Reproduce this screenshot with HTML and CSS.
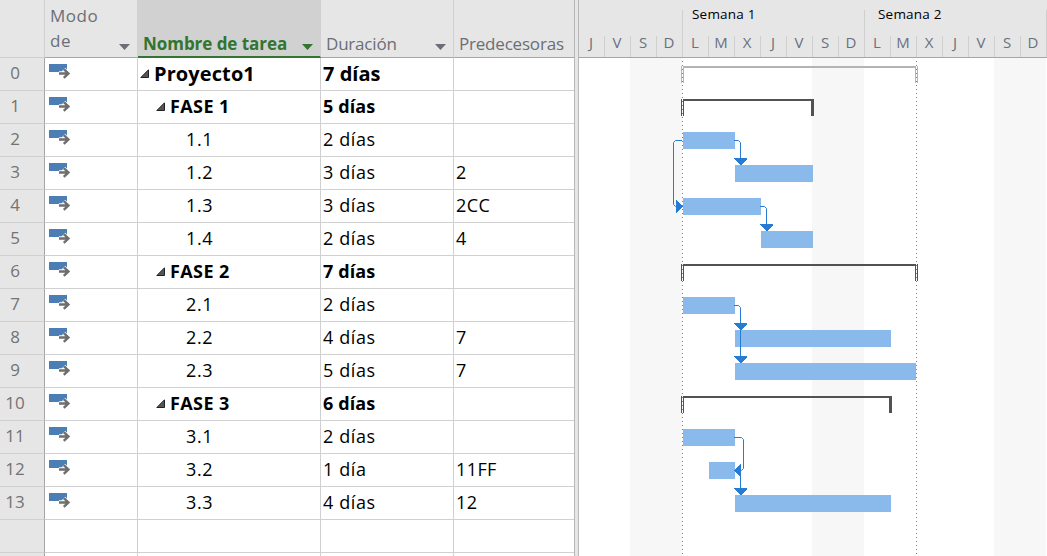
FILE: index.html
```html
<!DOCTYPE html>
<html lang="es">
<head>
<meta charset="utf-8">
<title>Proyecto1</title>
<link rel="stylesheet" href="styles.css">
</head>
<body>
<svg class="defs" width="0" height="0">
  <symbol id="mode" viewBox="0 0 22 15">
    <rect x="0" y="0" width="18" height="8" fill="#4a7eb4"/>
    <path d="M10 9.500H19M14.500 5.500L18.500 9.500L14.500 13.500" fill="none" stroke="#fff" stroke-width="4.600"/>
    <path d="M10 9.500H20M14.800 5.200L19.400 9.500L14.800 13.800" fill="none" stroke="#6e6e6e" stroke-width="2.400"/>
  </symbol>
  <symbol id="fold" viewBox="0 0 9 9"><path d="M8.500 .8V8.500H.8Z" fill="#555" stroke="#222" stroke-width="1"/></symbol>
  <symbol id="drop" viewBox="0 0 11 6"><path d="M0 0H11L5.500 6Z" fill="currentColor"/></symbol>
</svg>
<main class="app">
  <section class="sheet">
    <div class="row head">
      <div class="num"></div>
      <div class="cell mode"><span>Modo<br>de</span><svg class="drop"><use href="#drop"/></svg></div>
      <div class="cell name"><span>Nombre de tarea</span><svg class="drop"><use href="#drop"/></svg></div>
      <div class="cell dur"><span>Duración</span><svg class="drop"><use href="#drop"/></svg></div>
      <div class="cell pred"><span>Predecesoras</span></div>
    </div>
    <div id="rows"></div>
  </section>
  <div class="splitter"></div>
  <section class="gantt">
    <div class="scale">
      <div class="weeks"><div class="week part"></div><div class="week">Semana 1</div><div class="week second">Semana 2</div><div class="week last"></div></div>
      <div class="days" id="days"></div>
    </div>
    <svg class="chart" viewBox="579 58 468 498" width="468" height="498" shape-rendering="crispEdges">
      <g fill="#f7f7f7"><path d="M630 58h52v498h-52zM812 58h52v498h-52zM994 58h52v498h-52z"/></g>
      <g fill="#8abaec">
        <rect x="683" y="132" width="52" height="17"/><rect x="735" y="165" width="78" height="17"/>
        <rect x="683" y="198" width="78" height="17"/><rect x="761" y="231" width="52" height="17"/>
        <rect x="683" y="297" width="52" height="17"/><rect x="735" y="330" width="156" height="17"/>
        <rect x="735" y="363" width="181" height="17"/><rect x="683" y="429" width="52" height="17"/>
        <rect x="709" y="462" width="26" height="17"/><rect x="735" y="495" width="156" height="17"/>
      </g>
      <g fill="#b4b4b4"><path d="M681 66h1v17h-1zM683 66h233v2h-232v15h-1zM915 66h1v17h-1zM917 66h1v17h-1z"/></g>
      <g fill="#525252">
        <path d="M681 99h1v17h-1zM683 99h131v17h-3v-15h-127v15h-1z"/>
        <path d="M681 264h1v17h-1zM683 264h233v17h-1v-15h-231v15h-1zM917 264h1v17h-1z"/>
        <path d="M681 396h1v17h-1zM683 396h209v17h-3v-15h-205v15h-1z"/>
      </g>
      <path d="M682.500 61V556M916.500 61V556" stroke="#7c7c7c" stroke-dasharray="1 3" fill="none"/>
      <g fill="none" stroke="#267bd3" shape-rendering="auto">
        <path d="M734 140.500H738.500L740.500 142.500V160M682 140.500H675.500L673.500 142.500V204.500L675.500 206.500H678"/>
        <path d="M760 206.500H764.500L766.500 208.500V226M734 305.500H738.500L740.500 307.500V360"/>
        <path d="M734 437.500H741.500L743.500 439.500V468.500L741.500 470.500H738M740.500 464V491"/>
      </g>
      <g fill="#267bd3">
        <path d="M734 158h13v1l-6 6h-1l-6-6zM760 224h13v1l-6 6h-1l-6-6z"/>
        <path d="M734 323h13v1l-6 6h-1l-6-6zM734 356h13v1l-6 6h-1l-6-6zM734 488h13v1l-6 6h-1l-6-6z"/>
        <path d="M676 200l6.500 6.500l-6.500 6.500zM741 464l-7 6.500l7 6.500z"/>
      </g>
    </svg>
  </section>
</main>
<script src="app.js"></script>
</body>
</html>
```
FILE: styles.css
```css
* { box-sizing: border-box; }
body { margin: 0; width: 1047px; height: 556px; overflow: hidden; background: #fff; font-family: "Open Sans", "Noto Sans", sans-serif; color: #000; }
.defs { position: absolute; }
.app { display: flex; height: 556px; overflow: hidden; }
.sheet { width: 575px; flex: none; height: 556px; overflow: hidden; }
.row { display: grid; grid-template-columns: 45px 93px 183px 133px 121px; height: 33px; }
.num { background: #e6e6e6; border-right: 1px solid #a6a6a6; border-bottom: 1px solid #cfcfcf; color: #737373; font-size: 17px; line-height: 29px; text-align: center; padding-right: 14px; }
.cell { border-right: 1px solid #d0d0d0; border-bottom: 1px solid #d0d0d0; font-size: 18px; line-height: 31px; white-space: nowrap; overflow: hidden; padding-left: 2px; letter-spacing: .6px; }
.cell.pred { letter-spacing: .4px; }
.row .cell.mode { padding: 6px 0 0 4px; line-height: 0; }
.cell.mode svg { display: block; width: 22px; height: 15px; }
.cell.name { display: flex; padding-left: 48px; }
.bold .cell { font-weight: 700; letter-spacing: .1px; }
.bold .cell.name { padding-left: 18px; letter-spacing: .4px; }
.bold .cell.name svg { width: 9px; height: 9px; margin: 11px 5px 0 0; flex: none; }
.root .cell { font-size: 20px; line-height: 32px; letter-spacing: 0; }
.root .cell.name { padding-left: 2px; letter-spacing: .1px; }
.row.head { height: 58px; background: #e6e6e6; }
.head .num { border-right-color: #d0d0d0; }
.row.head .cell, .row.head .cell.mode, .row.head .cell.name { display: flex; align-items: flex-end; justify-content: space-between; padding: 0 7px 1px 5px; color: #6b6e76; font-size: 17px; line-height: 25px; letter-spacing: -.2px; border-bottom: 1px solid #a6a6a6; }
.row.head .cell.mode { padding-bottom: 4px; letter-spacing: .5px; }
.row.head .cell.name { background: #d1d1d1; color: #31752f; font-weight: 700; border-bottom: 2px solid #31752f; padding-bottom: 0; letter-spacing: -.05px; }
.head .cell .drop { width: 11px; height: 6px; margin-bottom: 6px; }
.head .cell.mode .drop { width: 11px; height: 6px; margin-bottom: 3px; }
.splitter { width: 5px; flex: none; background: #e6e6e6; border-right: 1px solid #b8b8b8; border-left: 1px solid #b8b8b8; margin-left: -1px; }
.gantt { width: 468px; flex: none; }
.scale { height: 58px; background: #e6e6e6; border-bottom: 1px solid #a6a6a6; padding-top: 10px; }
.weeks { display: flex; height: 26px; }
.week { width: 182px; flex: none; border-left: 1px solid #cfcfcf; padding-left: 9px; font-size: 13.5px; line-height: 9px; letter-spacing: .2px; }
.week.part { width: 103px; border-left: 0; }
.week.second { padding-left: 13px; }
.week.last { width: 1px; padding: 0; }
.days { display: flex; height: 21px; }
.day { width: 26px; flex: none; border-right: 1px solid #cfcfcf; color: #6b7080; font-size: 15px; line-height: 13px; text-align: center; padding-right: 1px; }
.chart { display: block; }
```
FILE: app.js
```js
const tasks = [
  ["Proyecto1", "7 días", "", "bold root"],
  ["FASE 1", "5 días", "", "bold"],
  ["1.1", "2 días", "", ""],
  ["1.2", "3 días", "2", ""],
  ["1.3", "3 días", "2CC", ""],
  ["1.4", "2 días", "4", ""],
  ["FASE 2", "7 días", "", "bold"],
  ["2.1", "2 días", "", ""],
  ["2.2", "4 días", "7", ""],
  ["2.3", "5 días", "7", ""],
  ["FASE 3", "6 días", "", "bold"],
  ["3.1", "2 días", "", ""],
  ["3.2", "1 día", "11FF", ""],
  ["3.3", "4 días", "12", ""]
];
const row = (n, name, dur, pred, kind, icon) => `<div class="row ${kind}"><div class="num">${n}</div><div class="cell mode">${icon}</div><div class="cell name">${kind ? '<svg><use href="#fold"/></svg>' : ''}<span>${name}</span></div><div class="cell dur">${dur}</div><div class="cell pred">${pred}</div></div>`;
document.getElementById("rows").innerHTML =
  tasks.map((t, i) => row(i, ...t, '<svg><use href="#mode"/></svg>')).join("") +
  row("", "", "", "", "", "") + row("", "", "", "", "", "");
document.getElementById("days").innerHTML = [..."JVSDLMXJVSDLMXJVSD"].map(d => `<div class="day">${d}</div>`).join("");
```
